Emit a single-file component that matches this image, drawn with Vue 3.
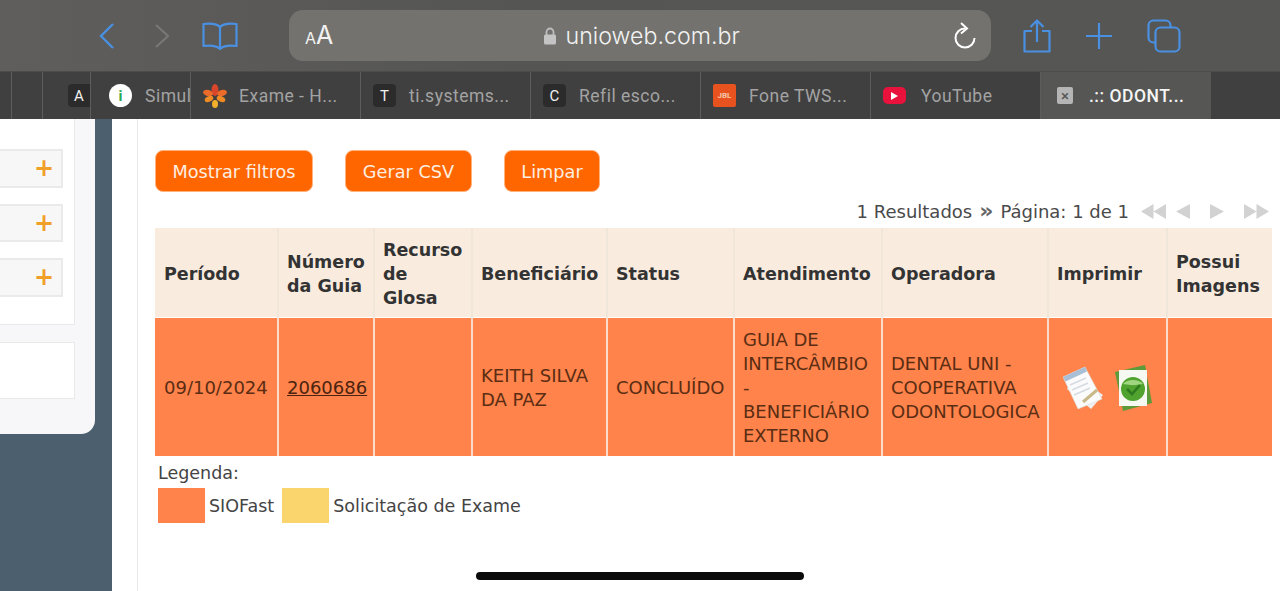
<template>
  <div class="page">
    <header class="toolbar">
      <div class="nav-group">
        <svg class="ic" width="24" height="30" viewBox="0 0 24 30"><path d="M17 3 5 15l12 12" fill="none" stroke="#4a90e2" stroke-width="2.4" /></svg>
        <svg class="ic fwd" width="24" height="30" viewBox="0 0 24 30"><path d="M6 4l12 11L6 26" fill="none" stroke="#777" stroke-width="2.2" /></svg>
        <svg class="ic book" width="36" height="30" viewBox="0 0 36 30">
          <path d="M18 6C15 2.500 7 2 1.500 3v22c5.500-1 13.500-.5 16.500 3 3-3.500 11-4 16.500-3V3C29 2 21 2.500 18 6zM18 6v22" fill="none" stroke="#4a90e2" stroke-width="2.200" stroke-linejoin="round" />
        </svg>
      </div>
      <div class="address">
        <span class="aa"><small>A</small>A</span>
        <span class="url">
          <svg width="14" height="20" viewBox="0 0 14 20"><path d="M3.500 9V6a3.500 3.500 0 0 1 7 0v3" fill="none" stroke="#bdbdbd" stroke-width="1.800" /><rect x="1" y="8.500" width="12" height="10" rx="1.500" fill="#c4c4c4" /></svg>
          unioweb.com.br
        </span>
        <svg class="reload" width="26" height="28" viewBox="0 0 26 28"><path d="M14 6.500a9.500 9.500 0 1 0 9.500 9.500" fill="none" stroke="#fff" stroke-width="2" /><path d="M10 1l6 5.500-6 5" fill="none" stroke="#fff" stroke-width="2" /></svg>
      </div>
      <div class="actions">
        <svg width="28" height="34" viewBox="0 0 28 34"><path d="M9 12H1.500v20.500h25V12H19M14 23V2M7.500 8 14 1.500 20.500 8" fill="none" stroke="#4a90e2" stroke-width="2.200" stroke-linejoin="round" /></svg>
        <svg width="28" height="28" viewBox="0 0 28 28"><path d="M14 1v26M1 14h26" stroke="#4a90e2" stroke-width="2.200" /></svg>
        <svg width="34" height="34" viewBox="0 0 34 34"><rect x="1.500" y="1.500" width="22" height="22" rx="5" fill="none" stroke="#4a90e2" stroke-width="2.200" /><rect x="8.500" y="8.500" width="24" height="24" rx="5" fill="#565654" stroke="#4a90e2" stroke-width="2.200" /></svg>
      </div>
    </header>

    <nav class="tabs">
      <div class="tab stub" style="width: 12px"></div>
      <div class="tab stub" style="width: 31px"></div>
      <div class="tab first" style="width: 48px"><span class="fav dark clip">A</span></div>
      <div v-for="t in tabs" :key="t.title" class="tab" :class="[t.kind, { active: t.active }]" :style="{ width: t.width + 'px' }">
        <span v-if="t.letter" class="fav dark">{{ t.letter }}</span>
        <span v-else-if="t.kind === 'info'" class="fav info">i</span>
        <svg v-else-if="t.kind === 'flower'" class="fav-svg" width="24" height="24" viewBox="0 0 24 24">
          <ellipse cx="12" cy="6" rx="3.500" ry="6" fill="#d8452b" />
          <ellipse cx="5" cy="9" rx="5" ry="3" fill="#ec6a2a" transform="rotate(15 5 9)" />
          <ellipse cx="19" cy="9" rx="5" ry="3" fill="#ec6a2a" transform="rotate(-15 19 9)" />
          <ellipse cx="6" cy="15" rx="4.500" ry="2.800" fill="#ef8a25" transform="rotate(-25 6 15)" />
          <ellipse cx="18" cy="15" rx="4.500" ry="2.800" fill="#ef8a25" transform="rotate(25 18 15)" />
          <ellipse cx="12" cy="20" rx="3" ry="4" fill="#f2b02c" />
        </svg>
        <span v-else-if="t.kind === 'jbl'" class="fav jbl">JBL</span>
        <span v-else-if="t.kind === 'yt'" class="fav yt"><i></i></span>
        <span v-else-if="t.kind === 'x'" class="fav closex">×</span>
        <span class="tab-title">{{ t.title }}</span>
      </div>
    </nav>

    <main class="body">
      <aside class="side">
        <div class="panel">
          <div class="white-box upper">
            <div v-for="n in 3" :key="n" class="acc-row"><span class="plus">+</span></div>
          </div>
          <div class="white-box lower"></div>
        </div>
      </aside>
      <section class="content">
        <div class="btn-row">
          <button class="btn wide">Mostrar filtros</button>
          <button class="btn mid">Gerar CSV</button>
          <button class="btn small">Limpar</button>
        </div>
        <div class="pager">
          <span>1 Resultados</span>
          <span class="raquo">»</span>
          <span>Página: 1 de 1</span>
          <span class="arrows">
            <svg width="25" height="17" viewBox="0 0 25 17"><path d="M12.500 1v15L0 8.500zM25 1v15L12.500 8.500z" fill="#d2d2d2" /></svg>
            <svg class="a2" width="14" height="17" viewBox="0 0 14 17"><path d="M14 1v15L0 8.500z" fill="#d2d2d2" /></svg>
            <svg class="a3" width="14" height="17" viewBox="0 0 14 17"><path d="M0 1v15l14-7.500z" fill="#d2d2d2" /></svg>
            <svg class="a4" width="25" height="17" viewBox="0 0 25 17"><path d="M0 1v15l12.500-7.500zM12.500 1v15L25 8.500z" fill="#d2d2d2" /></svg>
          </span>
        </div>
        <table class="grid">
          <colgroup>
            <col v-for="c in cols" :key="c.name" :style="{ width: c.width + 'px' }" />
          </colgroup>
          <thead>
            <tr>
              <th v-for="c in cols" :key="c.name">{{ c.name }}</th>
            </tr>
          </thead>
          <tbody>
            <tr>
              <td>09/10/2024</td>
              <td><a class="guia">2060686</a></td>
              <td></td>
              <td>KEITH SILVA DA PAZ</td>
              <td>CONCLUÍDO</td>
              <td>GUIA DE INTERCÂMBIO - BENEFICIÁRIO EXTERNO</td>
              <td>DENTAL UNI - COOPERATIVA ODONTOLOGICA</td>
              <td class="print-cell">
                <svg width="44" height="46" viewBox="0 0 44 46">
                  <path d="M14 10 42 30 30 44 6 24z" fill="#efefef" />
                  <path d="M2 12 24 2 41 34 17 44z" fill="#fbfbfb" stroke="#d8d8d8" stroke-width=".6" />
                  <path d="M2 12 24 2 26 6.500 4.500 16.500z" fill="#a9bfd6" />
                  <path d="M9 20l16-7M11 25l16-7M13 30l16-7" stroke="#d5dbe2" stroke-width="1.400" />
                  <path d="M22 37 36 25" stroke="#c8b98a" stroke-width="3" />
                </svg>
                <svg width="38" height="46" viewBox="0 0 38 46">
                  <path d="M0 7 30 0 37 38 8 46z" fill="#5d9a3a" />
                  <rect x="4" y="5" width="28" height="36" fill="#f6f8f2" />
                  <circle cx="18" cy="24" r="12" fill="#4fa32e" />
                  <path d="M8 19a12 9 0 0 1 20 0 20 8 0 0 1-20 0z" fill="#9fd67f" />
                  <path d="M12 24l5 5 8-9" fill="none" stroke="#2f7a1e" stroke-width="2.600" />
                </svg>
              </td>
              <td></td>
            </tr>
          </tbody>
        </table>
        <div class="legend">
          <div class="legend-title">Legenda:</div>
          <div class="legend-row">
            <span class="swatch orange"></span><span class="siofast">SIOFast</span>
            <span class="swatch yellow"></span><span>Solicitação de Exame</span>
          </div>
        </div>
      </section>
    </main>

    <div class="home-bar"></div>
  </div>
</template>

<script setup>
const tabs = [
  { title: 'Simul', kind: 'info', width: 100 },
  { title: 'Exame - H...', kind: 'flower', width: 170 },
  { title: 'ti.systems...', letter: 'T', width: 170 },
  { title: 'Refil esco...', letter: 'C', width: 170 },
  { title: 'Fone TWS...', kind: 'jbl', width: 170 },
  { title: 'YouTube', kind: 'yt', width: 170 },
  { title: '.:: ODONT...', kind: 'x', width: 170, active: true }
]

const cols = [
  { name: 'Período', width: 123 },
  { name: 'Número da Guia', width: 96 },
  { name: 'Recurso de Glosa', width: 98 },
  { name: 'Beneficiário', width: 135 },
  { name: 'Status', width: 127 },
  { name: 'Atendimento', width: 148 },
  { name: 'Operadora', width: 166 },
  { name: 'Imprimir', width: 119 },
  { name: 'Possui Imagens', width: 105 }
]
</script>

<style>
html, body {
  margin: 0;
  background: #fff;
  overflow: hidden;
}
</style>

<style scoped>
.page {
  position: relative;
  width: 1280px;
  height: 591px;
  display: flex;
  flex-direction: column;
  overflow: hidden;
  font-family: "DejaVu Sans", sans-serif;
  color: #3a3a3a;
}

.toolbar {
  height: 71px;
  flex: none;
  display: flex;
  align-items: center;
  background: linear-gradient(to right, #5f5e5c, #555553 40%, #565654);
  padding-left: 96px;
  box-sizing: border-box;
}

.nav-group {
  display: flex;
  align-items: center;
  width: 193px;
}

.ic { flex: none; }
.fwd { margin-left: 30px; }
.book { margin-left: 28px; }

.address {
  width: 702px;
  height: 51px;
  border-radius: 14px;
  background: #73726f;
  display: flex;
  align-items: center;
  padding: 0 14px 0 16px;
  box-sizing: border-box;
  font-family: Inter, Roboto, sans-serif;
  color: #f2f2f2;
}

.aa {
  font-size: 25px;
  line-height: 1;
}

.aa small {
  font-size: 16px;
}

.url {
  flex: 1;
  display: flex;
  justify-content: center;
  align-items: center;
  gap: 9px;
  font-size: 23.200px;
  font-weight: 300;
  margin-right: 2px;
}

.reload { flex: none; }

.actions {
  display: flex;
  align-items: center;
  gap: 34px;
  margin-left: 32px;
}

.tabs {
  height: 48px;
  flex: none;
  display: flex;
  background: #404040;
  border-top: 1px solid #4c4c4c;
  box-sizing: border-box;
  font-family: Roboto, sans-serif;
  font-size: 17.500px;
  letter-spacing: .5px;
  color: #a3a3a3;
}

.tab {
  flex: none;
  display: flex;
  align-items: center;
  gap: 13px;
  padding-left: 12px;
  box-sizing: border-box;
  border-right: 1px solid #5d5d5d;
  overflow: hidden;
  white-space: nowrap;
}

.tab.stub { padding: 0; }
.tab.first { justify-content: flex-end; padding: 0; }
.tab.info { padding-left: 18px; }
.tab.flower { gap: 12px; }
.tab.yt { gap: 15px; }

.tab.active {
  background: #565654;
  color: #f5f5f5;
  font-weight: 500;
  border-right: 0;
}

.fav {
  flex: none;
  width: 23px;
  height: 23px;
  border-radius: 4px;
  display: flex;
  align-items: center;
  justify-content: center;
  font-size: 15px;
  letter-spacing: 0;
}

.fav-svg { flex: none; }

.fav.dark {
  background: #2b2b2b;
  color: #f0f0f0;
}

.fav.clip {
  width: 22px;
  border-radius: 4px 0 0 4px;
}

.fav.info {
  background: #fff;
  color: #2fa84f;
  border-radius: 50%;
  font-weight: 700;
}

.fav.jbl {
  background: #e8521f;
  color: #f7c7a8;
  font-size: 8px;
  font-weight: 700;
  border-radius: 2px;
}

.fav.yt {
  background: #e8123c;
  border-radius: 5px;
  height: 17px;
}

.fav.yt i {
  width: 0;
  height: 0;
  border-left: 7px solid #fff;
  border-top: 4px solid transparent;
  border-bottom: 4px solid transparent;
}

.fav.closex {
  width: 16px;
  height: 17px;
  background: #b5b5b5;
  color: #555;
  border-radius: 2px;
  margin-left: 4px;
  margin-right: 3px;
}

.body {
  flex: 1;
  display: flex;
  min-height: 0;
}

.side {
  width: 137px;
  flex: none;
  background: linear-gradient(to right, #4b5f6f 112px, #fff 112px);
  border-right: 1px solid #e6e8ea;
}

.panel {
  width: 95px;
  height: 315px;
  background: #f7f7f9;
  border-radius: 0 0 14px 0;
}

.white-box {
  width: 75px;
  background: #fff;
  border: 1px solid #e9e9ea;
  border-left: 0;
  box-sizing: border-box;
}

.upper {
  height: 206px;
  border-top: 0;
  padding-top: 30px;
  display: flex;
  flex-direction: column;
  gap: 16px;
}

.lower {
  height: 57px;
  margin-top: 17px;
}

.acc-row {
  width: 63px;
  height: 38.500px;
  background: #f7f7f7;
  border: 2px solid #eaeaea;
  border-left: 0;
  box-sizing: border-box;
  display: flex;
  align-items: center;
  justify-content: flex-end;
  padding-right: 7px;
}

.plus {
  color: #f0a028;
  font-size: 24px;
  font-weight: 700;
  line-height: 1;
}

.content {
  flex: 1;
  min-width: 0;
  padding: 31px 0 0 17px;
}

.btn-row {
  display: flex;
  gap: 32px;
  height: 42px;
}

.btn {
  border: 1px solid #ffb27c;
  background: #ff6600;
  color: #fdeee2;
  font: 17.700px "DejaVu Sans", sans-serif;
  border-radius: 8px;
  padding: 1px 0 0;
  height: 42px;
  box-sizing: border-box;
}

.btn.wide { width: 158px; }
.btn.mid { width: 127px; }
.btn.small { width: 96px; }

.pager {
  height: 36px;
  box-sizing: border-box;
  padding: 2px 11px 0 0;
  display: flex;
  align-items: center;
  justify-content: flex-end;
  gap: 7px;
  font-size: 18px;
  color: #4a4a4a;
}

.raquo {
  font-size: 22px;
  line-height: 1;
  font-weight: 700;
  color: #666;
}

.arrows {
  display: flex;
  align-items: center;
  margin-left: 5px;
}

.arrows .a2 { margin-left: 10px; }
.arrows .a3 { margin-left: 20px; }
.arrows .a4 { margin-left: 20px; }

.grid {
  table-layout: fixed;
  width: 1117px;
  border-collapse: collapse;
}

.grid th {
  height: 89px;
  background: #f9ecdf;
  color: #333;
  font-size: 17.500px;
  font-weight: 700;
  line-height: 24px;
  text-align: left;
  padding: 3px 4px 0 8px;
  border-right: 2px solid #f1e6da;
  box-sizing: border-box;
}

.grid td {
  height: 139px;
  background: #ff834a;
  color: #5a2d14;
  font-size: 18px;
  line-height: 24px;
  padding: 3px 2px 0 8px;
  border-right: 2px solid #fbdcca;
  border-top: 1px solid #fff;
  box-sizing: border-box;
}

.grid th:first-child,
.grid td:first-child {
  padding-left: 9px;
}

.grid th:last-child,
.grid td:last-child {
  border-right: 0;
}

.guia {
  text-decoration: underline;
  color: #4a2410;
}

.print-cell {
  white-space: nowrap;
}

.print-cell svg {
  vertical-align: middle;
  margin-left: 4px;
}

.print-cell svg + svg {
  margin-left: 10px;
}

.legend {
  padding: 5px 0 0 3px;
  font-size: 17.500px;
  color: #444;
}

.legend-title {
  line-height: 24px;
}

.legend-row {
  display: flex;
  align-items: center;
  margin-top: 3px;
}

.swatch {
  width: 47px;
  height: 35px;
  flex: none;
  margin-right: 4px;
}

.swatch.orange { background: #ff834a; }
.swatch.yellow { background: #fad56e; }
.siofast { margin-right: 8px; }

.home-bar {
  position: absolute;
  left: 476px;
  top: 572px;
  width: 328px;
  height: 8px;
  border-radius: 4px;
  background: #0a0a0a;
}
</style>
